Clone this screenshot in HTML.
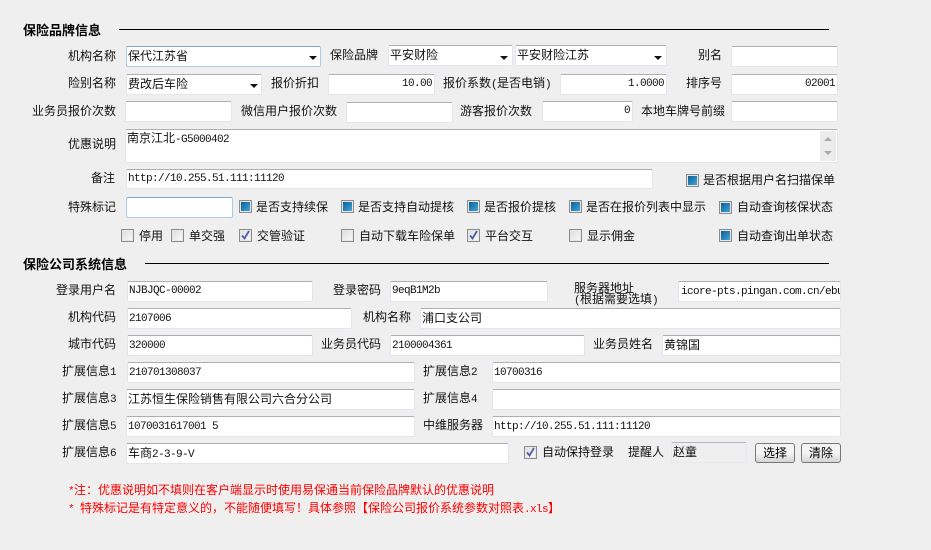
<!DOCTYPE html>
<html><head><meta charset="utf-8">
<style>
html,body{margin:0;padding:0;width:931px;height:550px;overflow:hidden;background:#efefef}
body{position:relative;font:12px/16px "WenQuanYi Zen Hei","Noto Sans CJK SC",sans-serif;color:#111}
.t{position:absolute;white-space:nowrap;height:16px;line-height:16px}
.m{font:11px/16px "Liberation Mono",monospace;letter-spacing:-.6px}
.b{font-weight:bold;color:#000;font-size:13px}
.i{position:absolute;box-sizing:border-box;height:21px;background:#fff;border:1px solid #e3e6ee;border-top:1px solid #aeaeb4;border-radius:2px;white-space:nowrap;overflow:hidden;padding:1px 1px 0;line-height:16px}
.i.m{padding-top:2px;line-height:16px}
.i.m.u{padding-top:1px}
.r{text-align:right;padding-right:2px}
.f{border-color:#a9cbe6;border-top-color:#7fa9cc}
.a{position:absolute;width:0;height:0;border:4px solid transparent;border-top:4px solid #111;border-bottom:0}
.l{position:absolute;height:1px;background:#000}
.c{position:absolute;box-sizing:border-box;width:13px;height:13px;border:1px solid #8c8c8c;background:linear-gradient(135deg,#dcdcdc,#fbfbfb);box-shadow:inset 0 0 0 1px #e6e6e6}
.c.on::after{content:"";position:absolute;left:1px;top:1px;width:9px;height:9px;background:linear-gradient(135deg,#0e5f95,#3fa6d8)}
.c.on{background:#e8e8e8}
.c svg{position:absolute;left:0;top:0}
.btn{position:absolute;box-sizing:border-box;width:40px;height:20px;border:1px solid #777;border-radius:3px;background:linear-gradient(#f4f4f4 50%,#d4d4d4);text-align:center;line-height:18px;color:#000}
.red{color:#f00}
</style></head><body>

<div class="t b" style="left:23px;top:22px">保险品牌信息</div>
<div class="l" style="left:119px;top:29px;width:710px"></div>

<div class="t" style="left:68px;top:48px">机构名称</div>
<div class="i f" style="left:126px;top:46px;width:195px">保代江苏省</div><div class="a" style="left:309px;top:56px"></div>
<div class="t" style="left:330px;top:47px">保险品牌</div>
<div class="i" style="left:388px;top:45px;width:125px">平安财险</div><div class="a" style="left:500px;top:56px"></div>
<div class="i" style="left:515px;top:45px;width:152px">平安财险江苏</div><div class="a" style="left:654px;top:56px"></div>
<div class="t" style="left:698px;top:47px">别名</div>
<div class="i" style="left:731px;top:46px;width:107px"></div>

<div class="t" style="left:68px;top:75px">险别名称</div>
<div class="i" style="left:126px;top:74px;width:136px">费改后车险</div><div class="a" style="left:250px;top:84px"></div>
<div class="t" style="left:271px;top:75px">报价折扣</div>
<div class="i r m u" style="left:328px;top:74px;width:107px">10.00</div>
<div class="t" style="left:443px;top:75px">报价系数<span class="m">(</span>是否电销<span class="m">)</span></div>
<div class="i r m u" style="left:560px;top:74px;width:107px">1.0000</div>
<div class="t" style="left:686px;top:75px">排序号</div>
<div class="i r m u" style="left:731px;top:74px;width:107px">02001</div>

<div class="t" style="left:32px;top:103px">业务员报价次数</div>
<div class="i" style="left:125px;top:101px;width:107px"></div>
<div class="t" style="left:241px;top:103px">微信用户报价次数</div>
<div class="i" style="left:346px;top:102px;width:107px"></div>
<div class="t" style="left:460px;top:103px">游客报价次数</div>
<div class="i r m u" style="left:542px;top:101px;width:91px">0</div>
<div class="t" style="left:641px;top:103px">本地车牌号前缀</div>
<div class="i" style="left:731px;top:101px;width:107px"></div>

<div class="t" style="left:68px;top:136px">优惠说明</div>
<div class="i" style="left:125px;top:129px;width:713px;height:34px;padding-top:0">南京江北<span class="m">-G5000402</span></div>
<div style="position:absolute;left:820px;top:131px;width:16px;height:30px;background:#ececec">
<div style="position:absolute;left:4px;top:6px;width:0;height:0;border:4px solid transparent;border-bottom:4px solid #aaa;border-top:0"></div>
<div style="position:absolute;left:4px;top:20px;width:0;height:0;border:4px solid transparent;border-top:4px solid #aaa;border-bottom:0"></div>
</div>

<div class="t" style="left:91px;top:170px">备注</div>
<div class="i m u" style="left:126px;top:169px;width:527px;height:20px">http://10.255.51.111:11120</div>
<div class="c on" style="left:686px;top:174px"></div>
<div class="t" style="left:703px;top:172px">是否根据用户名扫描保单</div>

<div class="t" style="left:68px;top:199px">特殊标记</div>
<div class="i f" style="left:126px;top:197px;width:107px"></div>
<div class="c on" style="left:239px;top:200px"></div><div class="t" style="left:256px;top:199px">是否支持续保</div>
<div class="c on" style="left:341px;top:200px"></div><div class="t" style="left:358px;top:199px">是否支持自动提核</div>
<div class="c on" style="left:467px;top:200px"></div><div class="t" style="left:484px;top:199px">是否报价提核</div>
<div class="c on" style="left:569px;top:200px"></div><div class="t" style="left:586px;top:199px">是否在报价列表中显示</div>
<div class="c on" style="left:719px;top:201px"></div><div class="t" style="left:737px;top:199px">自动查询核保状态</div>

<div class="c" style="left:121px;top:229px"></div><div class="t" style="left:139px;top:228px">停用</div>
<div class="c" style="left:171px;top:229px"></div><div class="t" style="left:189px;top:228px">单交强</div>
<div class="c" style="left:239px;top:229px"><svg width="11" height="11" viewBox="0 0 11 11"><path d="M2 5.500l2.500 3L9 1" fill="none" stroke="#4a5fa8" stroke-width="1.800"/></svg></div><div class="t" style="left:257px;top:228px">交管验证</div>
<div class="c" style="left:341px;top:229px"></div><div class="t" style="left:359px;top:228px">自动下载车险保单</div>
<div class="c" style="left:467px;top:229px"><svg width="11" height="11" viewBox="0 0 11 11"><path d="M2 5.500l2.500 3L9 1" fill="none" stroke="#4a5fa8" stroke-width="1.800"/></svg></div><div class="t" style="left:485px;top:228px">平台交互</div>
<div class="c" style="left:569px;top:229px"></div><div class="t" style="left:587px;top:228px">显示佣金</div>
<div class="c on" style="left:719px;top:229px"></div><div class="t" style="left:737px;top:228px">自动查询出单状态</div>

<div class="t b" style="left:23px;top:256px">保险公司系统信息</div>
<div class="l" style="left:145px;top:263px;width:684px"></div>

<div class="t" style="left:56px;top:282px">登录用户名</div>
<div class="i m u" style="left:127px;top:281px;width:186px">NJBJQC-00002</div>
<div class="t" style="left:333px;top:282px">登录密码</div>
<div class="i m u" style="left:390px;top:281px;width:158px">9eqB1M2b</div>
<div class="t" style="left:574px;top:282px;line-height:12px">服务器地址</div>
<div class="t" style="left:574px;top:293px;line-height:12px"><span class="m" style="line-height:12px">(</span>根据需要选填<span class="m" style="line-height:12px">)</span></div>
<div class="i m" style="left:678px;top:281px;width:163px;padding-left:2px">icore-pts.pingan.com.cn/ebu</div>

<div class="t" style="left:68px;top:309px">机构代码</div>
<div class="i m" style="left:127px;top:308px;width:225px">2107006</div>
<div class="t" style="left:363px;top:309px">机构名称</div>
<div class="i" style="left:420px;top:308px;width:421px">浦口支公司</div>

<div class="t" style="left:68px;top:336px">城市代码</div>
<div class="i m" style="left:127px;top:335px;width:186px">320000</div>
<div class="t" style="left:321px;top:336px">业务员代码</div>
<div class="i m" style="left:390px;top:335px;width:195px">2100004361</div>
<div class="t" style="left:593px;top:336px">业务员姓名</div>
<div class="i" style="left:662px;top:335px;width:179px">黄锦国</div>

<div class="t" style="left:62px;top:363px">扩展信息<span class="m">1</span></div>
<div class="i m" style="left:127px;top:362px;width:288px">210701308037</div>
<div class="t" style="left:423px;top:363px">扩展信息<span class="m">2</span></div>
<div class="i m" style="left:492px;top:362px;width:349px">10700316</div>

<div class="t" style="left:62px;top:390px">扩展信息<span class="m">3</span></div>
<div class="i" style="left:126px;top:389px;width:289px">江苏恒生保险销售有限公司六合分公司</div>
<div class="t" style="left:423px;top:390px">扩展信息<span class="m">4</span></div>
<div class="i" style="left:492px;top:389px;width:349px"></div>

<div class="t" style="left:62px;top:417px">扩展信息<span class="m">5</span></div>
<div class="i m" style="left:126px;top:416px;width:289px">1070031617001 5</div>
<div class="t" style="left:423px;top:417px">中维服务器</div>
<div class="i m" style="left:492px;top:416px;width:349px">http://10.255.51.111:11120</div>

<div class="t" style="left:62px;top:444px">扩展信息<span class="m">6</span></div>
<div class="i" style="left:126px;top:443px;width:383px">车商<span class="m">2-3-9-V</span></div>
<div class="c" style="left:524px;top:446px"><svg width="11" height="11" viewBox="0 0 11 11"><path d="M2 5.500l2.500 3L9 1" fill="none" stroke="#4a5fa8" stroke-width="1.800"/></svg></div>
<div class="t" style="left:542px;top:444px">自动保持登录</div>
<div class="t" style="left:628px;top:444px">提醒人</div>
<div class="i" style="left:671px;top:442px;width:76px;background:#efefef;border-color:#e6e9f2;border-top-color:#b8b8bc">赵童</div>
<div class="btn" style="left:755px;top:443px">选择</div>
<div class="btn" style="left:801px;top:443px">清除</div>

<div class="t red" style="left:68px;top:482px"><span class="m">*</span>注：优惠说明如不填则在客户端显示时使用易保通当前保险品牌默认的优惠说明</div>
<div class="t red" style="left:68px;top:500px"><span class="m">* </span>特殊标记是有特定意义的，不能随便填写！具体参照【保险公司报价系统参数对照表<span class="m">.xls</span>】</div>

</body></html>
